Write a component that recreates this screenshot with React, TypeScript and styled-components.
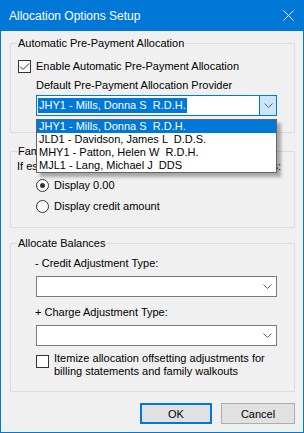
import React from 'react';
import styled, { createGlobalStyle } from 'styled-components';

const GlobalStyle = createGlobalStyle`
  html, body {
    margin: 0;
    padding: 0;
    background: #ffffff;
  }
  body {
    font-family: "Liberation Sans", Arial, sans-serif;
    font-size: 11px;
    color: #000000;
  }
`;

const Window = styled.div`
  width: 304px;
  height: 433px;
  box-sizing: border-box;
  border: 1px solid #0078d7;
  border-top: 0;
  background: #f0f0f0;
  display: flex;
  flex-direction: column;
`;

const TitleBar = styled.div`
  height: 31px;
  flex: none;
  background: #0078d7;
  color: #ffffff;
  font-size: 12px;
  display: flex;
  align-items: center;
  justify-content: space-between;
  padding-left: 8px;
`;

const CloseIcon = styled.svg`
  width: 11px;
  height: 11px;
  margin-right: 9px;
`;

const Body = styled.div`
  display: flex;
  flex-direction: column;
  padding: 6px 8px 0 9px;
`;

const GroupBox = styled.fieldset<{ $pt: number; $pb: number; $mt?: number }>`
  margin: ${(p) => p.$mt ?? 0}px 0 0;
  padding: ${(p) => p.$pt}px 6px ${(p) => p.$pb}px;
  border: 1px solid #dcdcdc;
  min-width: 0;
  display: flex;
  flex-direction: column;
  align-items: flex-start;
`;

const Legend = styled.legend`
  padding: 0 1px;
  margin-left: 0;
  line-height: 13px;
  font-size: 11px;
  white-space: nowrap;
`;

const Label = styled.div<{ $ml?: number; $mt?: number }>`
  margin-left: ${(p) => p.$ml ?? 0}px;
  margin-top: ${(p) => p.$mt ?? 0}px;
  line-height: 13px;
  white-space: pre;
`;

const Row = styled.div<{ $ml?: number; $mt?: number; $top?: boolean }>`
  display: flex;
  align-items: ${(p) => (p.$top ? 'flex-start' : 'center')};
  gap: 5px;
  margin-left: ${(p) => p.$ml ?? 0}px;
  margin-top: ${(p) => p.$mt ?? 0}px;
  line-height: 13px;
`;

const CheckBox = styled.span<{ $mt?: number }>`
  width: 13px;
  height: 13px;
  flex: none;
  box-sizing: border-box;
  border: 1px solid #333333;
  background: #ffffff;
  display: flex;
  align-items: center;
  justify-content: center;
  margin-top: ${(p) => p.$mt ?? 0}px;
`;

const Radio = styled.span`
  width: 13px;
  height: 13px;
  flex: none;
  box-sizing: border-box;
  border: 1px solid #333333;
  border-radius: 50%;
  background: #ffffff;
  display: flex;
  align-items: center;
  justify-content: center;
`;

const RadioDot = styled.span`
  width: 5px;
  height: 5px;
  border-radius: 50%;
  background: #333333;
`;

const WrapText = styled.div`
  max-width: 225px;
  line-height: 13px;
`;

const Combo = styled.div<{ $focused?: boolean; $mt?: number }>`
  position: relative;
  width: 241px;
  height: 21px;
  box-sizing: border-box;
  margin-left: 19px;
  margin-top: ${(p) => p.$mt ?? 0}px;
  border: 1px solid ${(p) => (p.$focused ? '#0078d7' : '#7a7a7a')};
  background: #ffffff;
  display: flex;
  align-items: stretch;
`;

const ComboText = styled.div`
  flex: 1;
  display: flex;
  align-items: center;
  padding-left: 1px;
`;

const Highlight = styled.span`
  background: #0078d7;
  color: #ffffff;
  line-height: 15px;
  padding: 0 1px;
  white-space: pre;
`;

const ComboButton = styled.div<{ $focused?: boolean }>`
  width: 17px;
  flex: none;
  display: flex;
  align-items: center;
  justify-content: center;
  box-sizing: border-box;
  background: ${(p) => (p.$focused ? '#cce4f7' : 'transparent')};
  border-left: ${(p) => (p.$focused ? '1px solid #0078d7' : '0')};
`;

const DropList = styled.div`
  position: absolute;
  top: 23px;
  left: -1px;
  width: 241px;
  box-sizing: border-box;
  border: 1px solid #646464;
  background: #ffffff;
  box-shadow: 4px 4px 3px rgba(0, 0, 0, 0.3);
  z-index: 10;
`;

const DropItem = styled.div<{ $selected?: boolean }>`
  height: 13px;
  line-height: 13px;
  padding-left: 2px;
  white-space: pre;
  background: ${(p) => (p.$selected ? '#0078d7' : 'transparent')};
  color: ${(p) => (p.$selected ? '#ffffff' : '#000000')};
`;

const ButtonRow = styled.div`
  display: flex;
  justify-content: flex-end;
  gap: 9px;
  margin-top: 11px;
`;

const Button = styled.button<{ $w: number; $default?: boolean }>`
  width: ${(p) => p.$w}px;
  height: 21px;
  box-sizing: border-box;
  padding: 0;
  background: #e1e1e1;
  border: ${(p) => (p.$default ? '2px solid #0078d7' : '1px solid #adadad')};
  font-family: "Liberation Sans", Arial, sans-serif;
  font-size: 11px;
  color: #000000;
`;

const Chevron = () => (
  <svg width="9" height="5" viewBox="0 0 9 5">
    <path d="M0.5 0.5 L4.5 4.5 L8.5 0.5" fill="none" stroke="#606060" strokeWidth="1" />
  </svg>
);

const providers = [
  'JHY1 - Mills, Donna S  R.D.H.',
  'JLD1 - Davidson, James L  D.D.S.',
  'MHY1 - Patton, Helen W  R.D.H.',
  'MJL1 - Lang, Michael J  DDS',
];

export default function App() {
  return (
    <>
      <GlobalStyle />
      <Window>
        <TitleBar>
          <span>Allocation Options Setup</span>
          <CloseIcon viewBox="0 0 11 11">
            <path d="M0.5 0.5 L10.5 10.5 M10.5 0.5 L0.5 10.5" stroke="#ffffff" strokeWidth="1" />
          </CloseIcon>
        </TitleBar>
        <Body>
          <GroupBox $pt={10} $pb={16}>
            <Legend>Automatic Pre-Payment Allocation</Legend>
            <Row $ml={1}>
              <CheckBox>
                <svg width="11" height="11" viewBox="0 0 11 11">
                  <path d="M1 5.5 L4 8.5 L10 2.5" fill="none" stroke="#333333" strokeWidth="1" />
                </svg>
              </CheckBox>
              <span>Enable Automatic Pre-Payment Allocation</span>
            </Row>
            <Label $ml={19} $mt={6}>Default Pre-Payment Allocation Provider</Label>
            <Combo $focused $mt={3}>
              <ComboText>
                <Highlight>{providers[0]}</Highlight>
              </ComboText>
              <ComboButton $focused>
                <Chevron />
              </ComboButton>
              <DropList>
                {providers.map((p, i) => (
                  <DropItem key={p} $selected={i === 0}>
                    {p}
                  </DropItem>
                ))}
              </DropList>
            </Combo>
          </GroupBox>

          <GroupBox $pt={2} $pb={14} $mt={12}>
            <Legend>Family Balance Display</Legend>
            <Label>If estimated balance is a credit, display on statements:</Label>
            <Row $ml={19} $mt={6}>
              <Radio>
                <RadioDot />
              </Radio>
              <span>Display 0.00</span>
            </Row>
            <Row $ml={19} $mt={8}>
              <Radio />
              <span>Display credit amount</span>
            </Row>
          </GroupBox>

          <GroupBox $pt={7} $pb={13} $mt={9}>
            <Legend>Allocate Balances</Legend>
            <Label $ml={18}>- Credit Adjustment Type:</Label>
            <Combo $mt={6}>
              <ComboText />
              <ComboButton>
                <Chevron />
              </ComboButton>
            </Combo>
            <Label $ml={18} $mt={9}>+ Charge Adjustment Type:</Label>
            <Combo $mt={6}>
              <ComboText />
              <ComboButton>
                <Chevron />
              </ComboButton>
            </Combo>
            <Row $ml={19} $mt={6} $top>
              <CheckBox $mt={3} />
              <WrapText>
                Itemize allocation offsetting adjustments for billing statements and family walkouts
              </WrapText>
            </Row>
          </GroupBox>

          <ButtonRow>
            <Button $w={72} $default>
              OK
            </Button>
            <Button $w={74}>Cancel</Button>
          </ButtonRow>
        </Body>
      </Window>
    </>
  );
}
